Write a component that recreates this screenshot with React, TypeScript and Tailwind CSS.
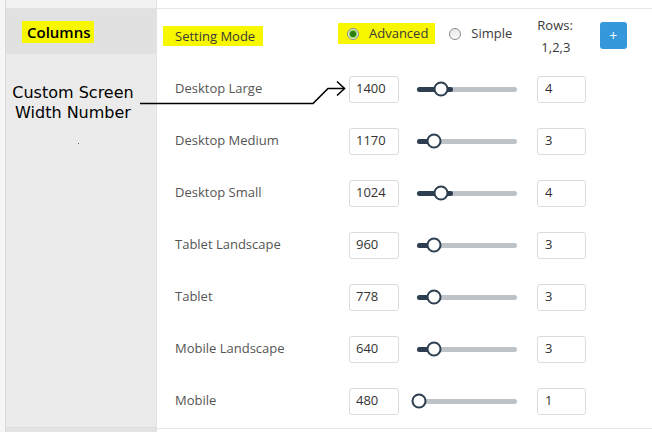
import React from "react";

interface Breakpoint {
  label: string;
  width: number;
  thumb: number;
  fill: number;
  rows: number;
}

const breakpoints: Breakpoint[] = [
  { label: "Desktop Large", width: 1400, thumb: 24, fill: 36, rows: 4 },
  { label: "Desktop Medium", width: 1170, thumb: 17, fill: 17, rows: 3 },
  { label: "Desktop Small", width: 1024, thumb: 24, fill: 36, rows: 4 },
  { label: "Tablet Landscape", width: 960, thumb: 17, fill: 17, rows: 3 },
  { label: "Tablet", width: 778, thumb: 17, fill: 17, rows: 3 },
  { label: "Mobile Landscape", width: 640, thumb: 17, fill: 17, rows: 3 },
  { label: "Mobile", width: 480, thumb: 2, fill: 0, rows: 1 },
];

const Slider: React.FC<{ thumb: number; fill: number }> = ({ thumb, fill }) => (
  <div className="relative w-[100px] h-[5px] rounded-full bg-[#bdc3c7]">
    <div className="h-full rounded-full bg-[#2c3e50]" style={{ width: fill }} />
    <div
      className="absolute top-1/2 w-[15px] h-[15px] -translate-x-1/2 -translate-y-1/2 rounded-full border-[2.5px] border-[#2c3e50] bg-white"
      style={{ left: thumb }}
    />
  </div>
);

const Radio: React.FC<{ checked?: boolean }> = ({ checked }) => (
  <span className="flex items-center justify-center w-[12px] h-[12px] rounded-full border border-[#8a8a8a] bg-gradient-to-b from-[#e8e8e8] to-[#fafafa]">
    {checked && <span className="w-[6px] h-[6px] rounded-full bg-[#2f7d12] shadow-[0_0_1px_1px_#6fcf3a]" />}
  </span>
);

export default function App() {
  return (
    <div className="relative w-[652px] h-[432px] flex bg-white overflow-hidden" style={{ fontFamily: '"Open Sans", sans-serif' }}>
      {/* left strip */}
      <div className="w-[6px] bg-[#f6f6f6] border-r border-[#d9d9d9]" />

      {/* sidebar */}
      <div className="w-[151px] flex flex-col bg-[#ebebeb] border-r border-[#e2e2e2]">
        <div className="h-[9px] bg-[#f2f2f2] border-b border-[#e2e2e2]" />
        <div className="h-[45px] bg-[#e1e1e1] flex items-center pl-[16px]">
          <span className="bg-[#f7f700] pl-[5px] pr-[3px] py-[2px] text-[15px] font-semibold text-black leading-[18px]">Columns</span>
        </div>
        <div className="flex-1" />
        <div className="h-[5px] bg-[#e3e3e3] border-t border-[#dedede]" />
      </div>

      {/* main */}
      <div className="flex-1 flex flex-col">
        <div className="h-[9px] border-b border-[#e6e6e6]" />
        <div className="h-[54px] flex items-start pl-[6px] text-[13px] text-[#3a3a3a]">
          <span className="mt-[17px] bg-[#f7f700] pl-[12px] pr-[8px] py-[1px] leading-[18px] w-[100px] whitespace-nowrap">Setting Mode</span>
          <div className="ml-[75px] mt-[14px] flex items-center bg-[#f7f700] pl-[9px] pr-[7px] h-[21px]">
            <Radio checked />
            <span className="ml-[10px]">Advanced</span>
          </div>
          <div className="ml-[14px] mt-[14px] flex items-center h-[21px]">
            <Radio />
            <span className="ml-[10px]">Simple</span>
          </div>
          <div className="ml-[25px] mt-[5px] flex flex-col leading-[22px]">
            <span>Rows:</span>
            <span className="pl-[4px]">1,2,3</span>
          </div>
          <button className="ml-[27px] mt-[13px] w-[27px] h-[27px] rounded-[3px] bg-[#3498db] text-white text-[14px] leading-none flex items-center justify-center">
            +
          </button>
        </div>

        <div className="flex-1 flex flex-col">
          {breakpoints.map((bp) => (
            <div key={bp.label} className="h-[52px] flex items-center pl-[18px] text-[13px]">
              <span className="w-[174px] text-[#555]">{bp.label}</span>
              <div className="w-[50px] h-[27px] border border-[#dcdcdc] rounded-[3px] flex items-center pl-[6px] text-[#333]">
                {bp.width}
              </div>
              <div className="ml-[18px]">
                <Slider thumb={bp.thumb} fill={bp.fill} />
              </div>
              <div className="ml-[20px] w-[49px] h-[27px] border border-[#dcdcdc] rounded-[3px] flex items-center pl-[7px] text-[#333]">
                {bp.rows}
              </div>
            </div>
          ))}
        </div>
        <div className="h-[4px] border-t border-[#e6e6e6]" />
      </div>

      {/* annotation */}
      <div
        className="absolute left-0 top-[83px] w-[146px] text-center text-[16px] leading-[20px] text-black"
        style={{ fontFamily: '"DejaVu Sans", Verdana, sans-serif' }}
      >
        Custom Screen
        <br />
        Width Number
      </div>
      <span className="absolute left-[78px] top-[143px] w-[1px] h-[1px] bg-[#555]" />
      <svg className="absolute left-0 top-0" width="652" height="432" viewBox="0 0 652 432" fill="none">
        <path d="M140 103.5 H313 L328 88.5 H344" stroke="#000" strokeWidth="1.6" />
        <path d="M337 81.5 L344.5 88.5 L337 95.5" stroke="#000" strokeWidth="1.6" />
      </svg>
    </div>
  );
}
